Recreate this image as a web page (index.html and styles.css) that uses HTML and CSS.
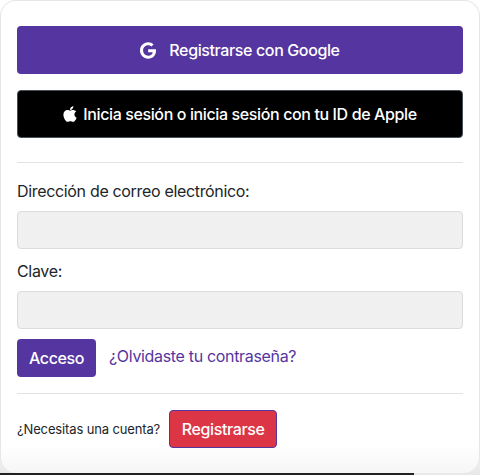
FILE: index.html
```html
<!DOCTYPE html>
<html lang="es">
<head>
    <meta charset="UTF-8">
    <meta name="viewport" content="width=device-width, initial-scale=1.0">
    <title>Acceso</title>
    <link rel="stylesheet" href="styles.css">
</head>
<body>
    <div class="card">
        <a class="btn btn-block btn-google" href="#">
            <svg class="icon-google" viewBox="0 0 488 512" width="16" height="17"><path fill="currentColor" d="M488 261.8C488 403.3 391.1 504 248 504 110.8 504 0 393.2 0 256S110.8 8 248 8c66.8 0 123 24.5 166.3 64.9l-67.5 64.9C258.5 52.6 94.3 116.6 94.3 256c0 86.5 69.1 156.6 153.7 156.6 98.2 0 135-70.4 140.8-106.9H248v-85.3h236.1c2.3 12.7 3.9 24.9 3.9 41.4z"/></svg>
            Registrarse con Google
        </a>
        <a class="btn btn-block btn-apple" href="#">
            <svg class="icon-apple" viewBox="0 0 384 512" width="14" height="18"><path fill="currentColor" d="M318.7 268.7c-.2-36.7 16.4-64.4 50-84.8-18.8-26.9-47.2-41.7-84.7-44.6-35.5-2.8-74.3 20.7-88.5 20.7-15 0-49.4-19.7-76.4-19.7C63.3 141.2 4 184.8 4 273.5q0 39.3 14.4 81.2c12.8 36.7 59 126.7 107.2 125.2 25.2-.6 43-17.9 75.8-17.9 31.8 0 48.3 17.9 76.4 17.9 48.6-.7 90.4-82.5 102.6-119.3-65.2-30.7-61.7-90-61.7-91.9zm-56.6-164.2c27.3-32.4 24.8-61.9 24-72.5-24.1 1.4-52 16.4-67.9 34.9-17.5 19.8-27.8 44.3-25.6 71.9 26.1 2 49.9-11.4 69.5-34.3z"/></svg>
            Inicia sesión o inicia sesión con tu ID de Apple
        </a>
        <hr class="divider divider-top">
        <form class="login-form">
            <label class="field-label" for="email">Dirección de correo electrónico:</label>
            <input class="field-input" id="email" type="text">
            <label class="field-label" for="password">Clave:</label>
            <input class="field-input" id="password" type="password">
            <div class="form-actions">
                <button class="btn btn-submit" type="button">Acceso</button>
                <a class="forgot-link" href="#">¿Olvidaste tu contraseña?</a>
            </div>
        </form>
        <hr class="divider divider-bottom">
        <div class="signup-row">
            <span class="signup-text">¿Necesitas una cuenta?</span>
            <a class="btn btn-signup" href="#">Registrarse</a>
        </div>
    </div>
    <div class="page-edge"></div>
</body>
</html>
```

FILE: styles.css
```css
* {
    box-sizing: border-box;
}
body {
    margin: 0;
    padding: 0;
    background: linear-gradient(to bottom, #ffffff 90%, #e8e8e8 100%);
    color: #212529;
    font-family: Inter, "Liberation Sans", sans-serif;
    font-size: 16px;
    letter-spacing: -0.33px;
    height: 475px;
    overflow: hidden;
}
.card {
    height: 473px;
    padding: 25px 16px 0;
    background: linear-gradient(to bottom, #ffffff 94%, #f6f6f6 100%);
    border: 1px solid #e6e6e6;
    border-bottom: none;
    border-radius: 16px;
}
.page-edge {
    width: 414px;
    height: 2px;
    background-color: #222222;
}
.btn {
    display: inline-flex;
    align-items: center;
    justify-content: center;
    height: 38px;
    border-radius: 4px;
    border: 1px solid transparent;
    color: #ffffff;
    font-family: inherit;
    font-size: 16px;
    font-weight: 450;
    letter-spacing: -0.38px;
    text-decoration: none;
}
.btn-block {
    display: flex;
    width: 100%;
    height: 48px;
}
.btn-google {
    background-color: #5535a0;
    margin-bottom: 16px;
}
.icon-google {
    margin-right: 13px;
}
.btn-apple {
    background-color: #000000;
    border-color: #4a5058;
}
.icon-apple {
    margin-right: 6px;
}
.divider {
    border: none;
    border-top: 1px solid #e3e3e3;
    margin: 0;
}
.divider-top {
    margin-top: 24px;
    margin-bottom: 16px;
}
.divider-bottom {
    margin-top: 16px;
    margin-bottom: 16px;
}
.field-label {
    display: block;
    line-height: 24px;
    margin-bottom: 8px;
}
.field-input {
    display: block;
    width: 100%;
    height: 38px;
    margin-bottom: 10px;
    background-color: #f0f0f0;
    border: 1px solid #dcdcdc;
    border-radius: 4px;
}
.form-actions {
    display: flex;
    align-items: center;
    gap: 13px;
}
.btn-submit {
    width: 79px;
    background-color: #5535a0;
}
.forgot-link {
    color: #5535a0;
    text-decoration: none;
    position: relative;
    top: -2px;
}
.signup-row {
    display: flex;
    align-items: center;
    gap: 9px;
}
.signup-text {
    font-size: 13px;
    letter-spacing: -0.14px;
}
.btn-signup {
    width: 108px;
    background-color: #dc3545;
    border-color: #5535a0;
}
```
